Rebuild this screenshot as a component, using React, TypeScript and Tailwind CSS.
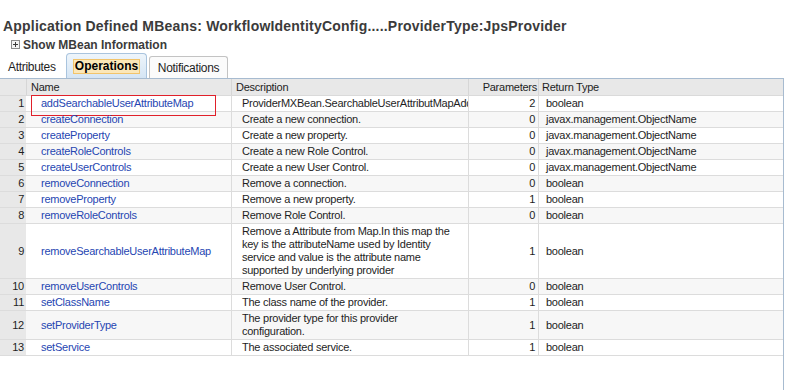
import React from 'react';

type Op = {
  name: string;
  desc: string[];
  params: number;
  ret: string;
};

const ops: Op[] = [
  { name: 'addSearchableUserAttributeMap', desc: ['ProviderMXBean.SearchableUserAttributMapAdd'], params: 2, ret: 'boolean' },
  { name: 'createConnection', desc: ['Create a new connection.'], params: 0, ret: 'javax.management.ObjectName' },
  { name: 'createProperty', desc: ['Create a new property.'], params: 0, ret: 'javax.management.ObjectName' },
  { name: 'createRoleControls', desc: ['Create a new Role Control.'], params: 0, ret: 'javax.management.ObjectName' },
  { name: 'createUserControls', desc: ['Create a new User Control.'], params: 0, ret: 'javax.management.ObjectName' },
  { name: 'removeConnection', desc: ['Remove a connection.'], params: 0, ret: 'boolean' },
  { name: 'removeProperty', desc: ['Remove a new property.'], params: 1, ret: 'boolean' },
  { name: 'removeRoleControls', desc: ['Remove Role Control.'], params: 0, ret: 'boolean' },
  {
    name: 'removeSearchableUserAttributeMap',
    desc: [
      'Remove a Attribute from Map.In this map the',
      'key is the attributeName used by Identity',
      'service and value is the attribute name',
      'supported by underlying provider',
    ],
    params: 1,
    ret: 'boolean',
  },
  { name: 'removeUserControls', desc: ['Remove User Control.'], params: 0, ret: 'boolean' },
  { name: 'setClassName', desc: ['The class name of the provider.'], params: 1, ret: 'boolean' },
  { name: 'setProviderType', desc: ['The provider type for this provider', 'configuration.'], params: 1, ret: 'boolean' },
  { name: 'setService', desc: ['The associated service.'], params: 1, ret: 'boolean' },
];

const cols = 'grid grid-cols-[26px_205px_237px_70px_1fr]';

export default function App() {
  return (
    <div className="h-[390px] w-[791px] overflow-hidden bg-white font-['Liberation_Sans',Arial,sans-serif] text-[11px] tracking-[-0.25px] text-[#1e1e1e]">
      <h1 className="pl-[3px] pt-[17px] text-[14px] font-bold leading-[18px] tracking-[0.2px] text-[#3b3b3b]">
        Application Defined MBeans: WorkflowIdentityConfig.....ProviderType:JpsProvider
      </h1>

      <div className="flex h-[16px] items-center gap-[3px] pl-[11px] pt-[3px]">
        <span className="flex h-[9px] w-[9px] items-center justify-center border border-[#8c8c8c] bg-[#f4f4f4]">
          <svg width="7" height="7" viewBox="0 0 7 7">
            <path d="M1 3.5h5M3.5 1v5" stroke="#3c3c3c" strokeWidth="1" />
          </svg>
        </span>
        <span className="text-[12px] font-bold tracking-[0px] text-[#3b3b3b]">Show MBean Information</span>
      </div>

      {/* tabs */}
      <div className="mt-[2px] flex h-[25px] items-end">
        <div className="flex h-[22px] w-[66px] items-center pl-[8px] text-[12px] tracking-[-0.3px]">Attributes</div>
        <div className="flex h-[25px] w-[81px] items-center justify-center rounded-t-[4px] border border-b-0 border-[#a9c4de] bg-gradient-to-b from-[#eef5fb] to-[#d5e5f4]">
          <span className="border border-[#f2c46b] bg-[#fbe7b8] px-[1px] text-[12px] font-bold leading-[13px] tracking-[0px] text-black">
            Operations
          </span>
        </div>
        <div className="ml-[2px] flex h-[22px] w-[79px] items-center justify-center rounded-t-[3px] border border-b-0 border-[#c3c3c3] bg-[#fbfbfb] text-[12px] tracking-[-0.3px]">
          Notifications
        </div>
      </div>

      {/* table */}
      <div className="h-[312px] w-[784px] border-r border-t border-[#a7bbd0]">
        <div className={`${cols} h-[17px] border-b border-[#dadada] bg-[#e8e8e8] leading-[16px]`}>
          <div />
          <div className="border-l border-[#d6d6d6] pl-[4px]">Name</div>
          <div className="border-l border-[#d6d6d6] pl-[4px]">Description</div>
          <div className="border-l border-[#d6d6d6] pr-[1px] text-right">Parameters</div>
          <div className="border-l border-[#d6d6d6] pl-[3px]">Return Type</div>
        </div>
        {ops.map((op, i) => (
          <div
            key={op.name}
            className={`${cols} border-b border-[#dcdcdc] leading-[13px] ${i % 2 === 1 ? 'bg-[#f7f7f7]' : 'bg-white'}`}
          >
            <div className="flex items-center justify-end bg-[#e8e8e8] pr-[2px]">{i + 1}</div>
            <div className="relative flex items-center py-[1px] pl-[15px] text-[#2646b2]">
              {i === 0 && (
                <div className="absolute left-[5px] top-[-1px] h-[21px] w-[185px] shadow-[inset_0_0_0_1px_#e0202a]" />
              )}
              {op.name}
            </div>
            <div className="flex flex-col justify-center overflow-hidden whitespace-nowrap border-l border-[#dcdcdc] py-[1px] pl-[10px]">
              {op.desc.map((d) => (
                <div key={d}>{d}</div>
              ))}
            </div>
            <div className="flex items-center justify-end border-l border-[#dcdcdc] pr-[3px]">{op.params}</div>
            <div className="flex items-center border-l border-[#dcdcdc] pl-[7px]">{op.ret}</div>
          </div>
        ))}
      </div>
    </div>
  );
}
